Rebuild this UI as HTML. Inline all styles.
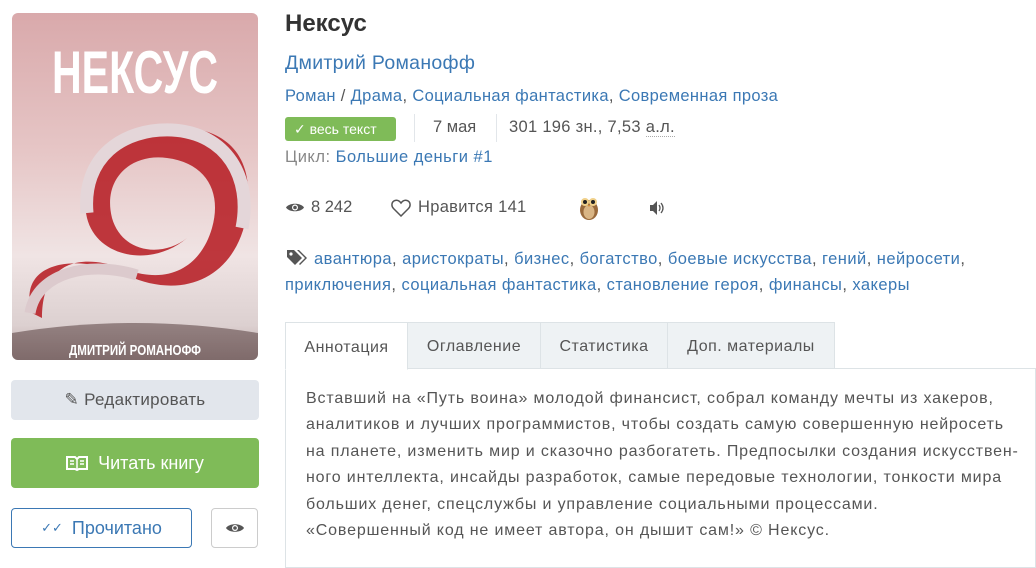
<!DOCTYPE html>
<html><head><meta charset="utf-8"><style>
*{box-sizing:border-box;margin:0;padding:0}
body{width:1036px;height:558px;overflow:hidden;background:#fff;font-family:"Liberation Sans","DejaVu Sans",sans-serif;color:#555;position:relative;font-size:16px}
a{color:#3b78b4;text-decoration:none}
.abs{position:absolute;white-space:nowrap}
.cover{left:12px;top:13px;width:246px;height:347px;border-radius:6px;overflow:hidden;background:linear-gradient(180deg,#d9a9ab 0%,#e6c6c6 40%,#f0e4e4 70%,#dcd0d0 90%,#b9a9a9 100%)}
.btn{position:absolute;border-radius:4px;display:flex;align-items:center;justify-content:center;font-size:17px}
.tab{position:absolute;top:322px;height:47px;border:1px solid #dde3e6;background:#eef2f4;display:flex;align-items:center;justify-content:center;font-size:16px;color:#555;letter-spacing:0.5px;padding-top:3px}
.p{line-height:26.4px;font-size:16px;color:#555;letter-spacing:0.85px}
</style></head><body>
<div class="abs cover">
<svg width="246" height="347" viewBox="0 0 246 347">
<text x="123" y="80" text-anchor="middle" font-family="Liberation Sans" font-weight="bold" font-size="60" fill="#fff" textLength="166" lengthAdjust="spacingAndGlyphs">НЕКСУС</text>
<path d="M20 300 C5 250 60 240 110 260 C170 290 225 265 235 200 C245 130 200 110 150 115 C90 120 65 160 75 205 C85 245 140 255 175 225 C150 245 110 240 100 205 C90 165 120 140 155 145 C195 150 210 180 200 215 C190 250 160 275 110 255 C60 238 30 255 30 305 Z" fill="#b8242a" opacity="0.9"/>
<path d="M75 200 C70 145 110 115 160 117 C215 120 240 165 230 215" fill="none" stroke="#e4d6d9" stroke-width="13"/>
<path d="M18 300 C25 258 80 248 125 262" fill="none" stroke="#dccacd" stroke-width="11"/>
<path d="M0 320 Q123 300 246 320 L246 347 L0 347Z" fill="#3a2020" opacity="0.45"/>
<text x="123" y="342" text-anchor="middle" font-family="Liberation Sans" font-weight="bold" font-size="15" fill="#fff" textLength="132" lengthAdjust="spacingAndGlyphs">ДМИТРИЙ РОМАНОФФ</text>
</svg></div>

<div class="btn" style="left:11px;top:380px;width:248px;height:40px;background:#e2e6ec;color:#555;letter-spacing:0.3px">✎&nbsp;Редактировать</div>
<div class="btn" style="left:11px;top:438px;width:248px;height:50px;background:#7fbb58;color:#fff;font-size:18px">
<svg width="22" height="16" viewBox="0 0 22 16" style="margin-right:10px"><path d="M1 2h8l2 2 2-2h8v12h-8l-2 1-2-1H1z" fill="none" stroke="#fff" stroke-width="2"/><path d="M11 4v10M4 6h4M4 9h4M14 6h4M14 9h4" stroke="#fff" stroke-width="1.5"/></svg>Читать книгу</div>
<div class="btn" style="left:11px;top:508px;width:181px;height:40px;border:1px solid #3b78b4;color:#3b78b4;font-size:18px">
<span style="font-size:13px;margin-right:9px">✓✓</span>Прочитано</div>
<div class="btn" style="left:211px;top:508px;width:47px;height:40px;border:1px solid #ccc;color:#555">
<svg width="20" height="12" viewBox="0 0 20 12"><path d="M1 6C4 1 16 1 19 6C16 11 4 11 1 6Z" fill="#555"/><circle cx="10" cy="6" r="3" fill="#fff"/><circle cx="10" cy="6" r="1.8" fill="#555"/></svg></div>

<div class="abs" style="left:285px;top:10px;font-size:24px;font-weight:bold;color:#333">Нексус</div>
<div class="abs" style="left:285px;top:52px;font-size:19.5px;letter-spacing:0.3px"><a>Дмитрий Романофф</a></div>
<div class="abs" style="left:285px;top:87px;font-size:16.5px;letter-spacing:0.35px"><a>Роман</a> / <a>Драма</a>, <a>Социальная фантастика</a>, <a>Современная проза</a></div>
<div class="abs" style="left:285px;top:117px;width:111px;height:24px;background:#7fbb58;border-radius:3px;color:#fff;font-size:14px;line-height:24px;padding-left:9px">✓ весь текст</div>
<div class="abs" style="left:414px;top:114px;width:1px;height:28px;background:#e2e6ea"></div>
<div class="abs" style="left:433px;top:118px;font-size:16.5px">7 мая</div>
<div class="abs" style="left:496px;top:114px;width:1px;height:28px;background:#e2e6ea"></div>
<div class="abs" style="left:509px;top:118px;font-size:16.5px;letter-spacing:0.3px">301 196 зн., 7,53 <span style="border-bottom:1px dotted #aaa">а.л.</span></div>
<div class="abs" style="left:285px;top:148px;font-size:16.5px;color:#888;letter-spacing:0.5px">Цикл: <a>Большие деньги #1</a></div>

<div class="abs" style="left:285px;top:198px;font-size:16.5px;display:flex;align-items:center">
<svg width="20" height="13" viewBox="0 0 20 12" style="margin-right:6px"><path d="M1 6C4 1 16 1 19 6C16 11 4 11 1 6Z" fill="#555"/><circle cx="10" cy="6" r="3" fill="#fff"/><circle cx="10" cy="6" r="1.8" fill="#555"/></svg>8 242</div>
<div class="abs" style="left:391px;top:198px;font-size:16.5px;display:flex;align-items:center;letter-spacing:0.3px">
<svg width="20" height="18" viewBox="0 0 20 18" style="margin-right:7px"><path d="M10 17L2.5 9.5C0 7 0.5 2.5 4 1.5C6.5 0.8 8.5 2 10 4C11.5 2 13.5 0.8 16 1.5C19.5 2.5 20 7 17.5 9.5Z" fill="none" stroke="#555" stroke-width="1.5"/></svg>Нравится 141</div>
<div class="abs" style="left:578px;top:193px;width:22px;height:28px">
<svg width="22" height="28" viewBox="0 0 22 28"><ellipse cx="11" cy="17" rx="9" ry="10" fill="#9a6a3c"/><ellipse cx="11" cy="19" rx="5.5" ry="7" fill="#d9b585"/><circle cx="7" cy="9" r="4" fill="#f0d08a"/><circle cx="15" cy="9" r="4" fill="#f0d08a"/><circle cx="7" cy="9" r="2" fill="#222"/><circle cx="15" cy="9" r="2" fill="#222"/><path d="M10 12l1 2 1-2z" fill="#d08020"/></svg></div>
<div class="abs" style="left:649px;top:200px">
<svg width="16" height="16" viewBox="0 0 16 16"><path d="M1 5h3l4-4v14l-4-4H1z" fill="#555"/><path d="M10 5q2 3 0 6M12 3q4 5 0 10" fill="none" stroke="#555" stroke-width="1.3"/></svg></div>

<div class="abs" style="left:285px;top:246px;font-size:16.5px;line-height:26px;letter-spacing:0.45px">
<svg width="24" height="18" viewBox="0 0 22 18" style="vertical-align:-2px"><path d="M1 2h7l8 8-7 7-8-8z" fill="#555"/><circle cx="5" cy="6" r="1.6" fill="#fff"/><path d="M11 2h2l8 8-7 7-1-1 6-6z" fill="#555"/></svg>
<a>авантюра</a>, <a>аристократы</a>, <a>бизнес</a>, <a>богатство</a>, <a>боевые искусства</a>, <a>гений</a>, <a>нейросети</a>,<br><a>приключения</a>, <a>социальная фантастика</a>, <a>становление героя</a>, <a>финансы</a>, <a>хакеры</a></div>

<div class="abs" style="left:285px;top:368px;width:751px;height:200px;border:1px solid #dde3e6"></div>
<div class="tab" style="left:285px;width:123px;background:#fff;border-bottom-color:#fff;height:48px">Аннотация</div>
<div class="tab" style="left:407px;width:134px">Оглавление</div>
<div class="tab" style="left:540px;width:128px">Статистика</div>
<div class="tab" style="left:667px;width:168px">Доп. материалы</div>

<div class="abs p" style="left:306px;top:386px">Вставший на «Путь воина» молодой финансист, собрал команду мечты из хакеров,<br>аналитиков и лучших программистов, чтобы создать самую совершенную нейросеть<br>на планете, изменить мир и сказочно разбогатеть. Предпосылки создания искусствен-<br>ного интеллекта, инсайды разработок, самые передовые технологии, тонкости мира<br>больших денег, спецслужбы и управление социальными процессами.<br>«Совершенный код не имеет автора, он дышит сам!» © Нексус.</div>
</body></html>
